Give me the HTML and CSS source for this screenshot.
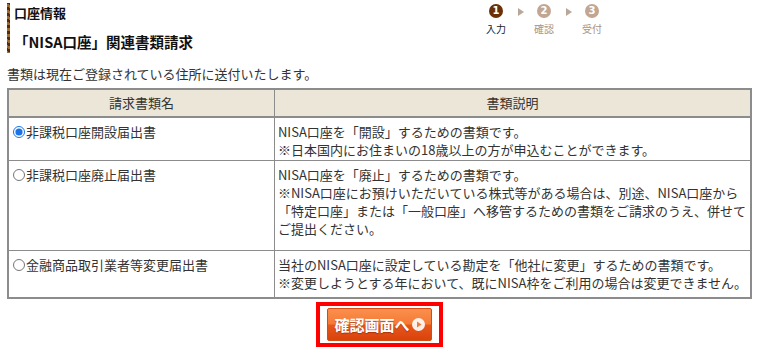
FILE: index.html
```html
<!DOCTYPE html>
<html lang="ja">
<head>
<meta charset="utf-8">
<link rel="stylesheet" href="styles.css">
</head>
<body>
<div class="page">
  <div class="head">
    <div class="head-title">
      <div class="cat">口座情報</div>
      <div class="ttl">「NISA口座」関連書類請求</div>
    </div>
    <ol class="steps">
      <li class="step on"><span class="num">1</span><span class="lbl">入力</span></li>
      <li class="arrow"></li>
      <li class="step"><span class="num">2</span><span class="lbl">確認</span></li>
      <li class="arrow"></li>
      <li class="step"><span class="num">3</span><span class="lbl">受付</span></li>
    </ol>
  </div>
  <p class="lead">書類は現在ご登録されている住所に送付いたします。</p>
  <table class="docs">
    <colgroup><col class="c1"><col class="c2"></colgroup>
    <thead>
      <tr><th>請求書類名</th><th>書類説明</th></tr>
    </thead>
    <tbody>
      <tr class="r1">
        <td><label class="opt"><input type="radio" name="doc" checked>非課税口座開設届出書</label></td>
        <td>NISA口座を「開設」するための書類です。<br><span class="note">※日本国内にお住まいの18歳以上の方が申込むことができます。</span></td>
      </tr>
      <tr class="r2">
        <td><label class="opt"><input type="radio" name="doc">非課税口座廃止届出書</label></td>
        <td>NISA口座を「廃止」するための書類です。<br><span class="note">※NISA口座にお預けいただいている株式等がある場合は、別途、NISA口座から</span><br>「特定口座」または「一般口座」へ移管するための書類をご請求のうえ、併せて<br>ご提出ください。</td>
      </tr>
      <tr class="r3">
        <td><label class="opt"><input type="radio" name="doc">金融商品取引業者等変更届出書</label></td>
        <td>当社のNISA口座に設定している勘定を「他社に変更」するための書類です。<br><span class="note">※変更しようとする年において、既にNISA枠をご利用の場合は変更できません。</span></td>
      </tr>
    </tbody>
  </table>
  <div class="actions">
    <div class="focus">
      <button class="btn" type="button">確認画面へ<span class="go"><svg width="13" height="13" viewBox="0 0 13 13"><circle cx="6.5" cy="6.5" r="6.5" fill="#fff" fill-opacity="0.9"/><path d="M5 3.5 L9.5 6.5 L5 9.5 Z" fill="#f07a3c"/></svg></span></button>
    </div>
  </div>
</div>
</body>
</html>
```
FILE: styles.css
```css
html, body {
  margin: 0;
  padding: 0;
  background: #fff;
}
body {
  font-family: "Noto Sans CJK JP", "Noto Sans", sans-serif;
  font-size: 13px;
  color: #333;
}
.page {
  padding: 3px 7px 0;
}
.head {
  display: grid;
  grid-template-columns: 474px auto;
  height: 50px;
}
.head-title {
  border-left: 3px solid transparent;
  border-image: repeating-linear-gradient(45deg, #a36a30 0 2px, #4e2c0e 2px 4px) 1;
  padding-left: 4px;
  height: 50px;
  box-sizing: border-box;
}
.cat {
  font-weight: bold;
  font-size: 13px;
  line-height: 20px;
  color: #111;
}
.ttl {
  font-weight: bold;
  font-size: 14.5px;
  line-height: 20px;
  margin-top: 9px;
  color: #111;
}
.steps {
  list-style: none;
  margin: 0;
  padding: 1px 0 0;
  display: flex;
  align-items: flex-start;
}
.step {
  width: 30px;
  display: flex;
  flex-direction: column;
  align-items: center;
}
.num {
  width: 14px;
  height: 14px;
  border-radius: 50%;
  background: #c1a793;
  color: #fff;
  font: bold 10px/14px "DejaVu Sans", sans-serif;
  text-align: center;
}
.lbl {
  font-size: 10px;
  line-height: 14px;
  margin-top: 4px;
  color: #a89484;
}
.step.on .num { background: #6a3008; }
.step.on .lbl { color: #222; }
.arrow {
  width: 0;
  height: 0;
  border-left: 6px solid #b9a89a;
  border-top: 4px solid transparent;
  border-bottom: 4px solid transparent;
  margin: 4px 5px 0 7px;
}
.lead {
  margin: 12px 0 5px;
  line-height: 18px;
}
.docs {
  width: 100%;
  border-collapse: collapse;
  border: 2px solid #8c8c8c;
}
.docs .c1 { width: 267px; }
.docs th {
  background: #ebe6d7;
  font-weight: normal;
  height: 26px;
  border: 1px solid #8c8c8c;
  border-bottom-width: 2px;
  line-height: 18px;
  padding: 0;
}
.docs td {
  border: 1px solid #8c8c8c;
  vertical-align: top;
  padding: 5px 3px;
  line-height: 18px;
  white-space: nowrap;
}
.docs tr.r1 td { padding-bottom: 1px; }
.docs tr.r2 td { padding-bottom: 12px; }
.opt {
  display: flex;
  align-items: center;
}
.opt input {
  margin: 0 1px 0 1px;
  width: 12px;
  height: 12px;
  accent-color: #1a73e8;
}
.note { color: inherit; }
.actions {
  display: flex;
  justify-content: center;
  padding-top: 3px;
}
.focus {
  border: 4px solid #f00;
  padding: 2px 7px;
}
.btn {
  display: flex;
  align-items: center;
  gap: 2px;
  height: 33px;
  padding: 0 6px;
  border: 1px solid #d84a10;
  border-radius: 2px;
  background: linear-gradient(#fb8f4e 0%, #f57a35 48%, #e8561a 52%, #d9430c 100%);
  color: #fff;
  font-family: "Noto Sans CJK JP", sans-serif;
  font-weight: bold;
  font-size: 15px;
  text-shadow: 0 1px 1px rgba(120,30,0,.5);
  cursor: pointer;
}
.go { display: flex; }
```
